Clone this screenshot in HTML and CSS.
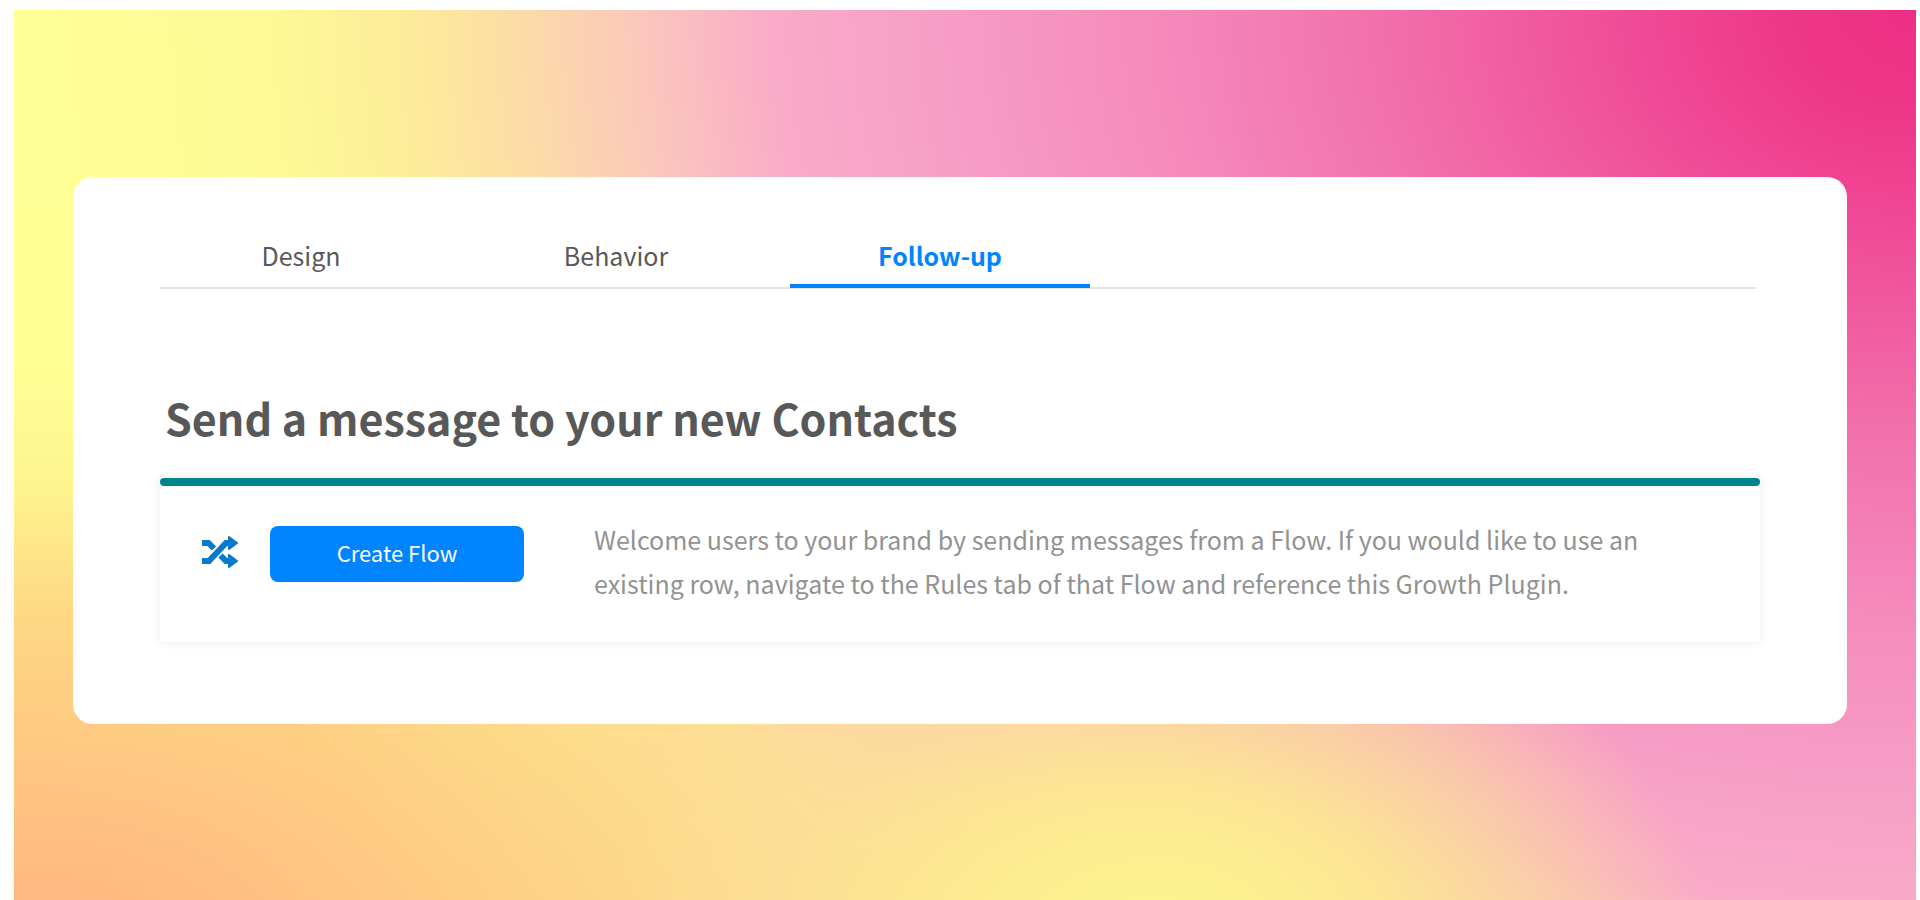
FILE: index.html
```html
<!DOCTYPE html>
<html lang="en">
<head>
<meta charset="utf-8">
<title>Growth Plugin</title>
<link rel="stylesheet" href="styles.css">
</head>
<body>
<main class="stage">
  <section class="card">
    <nav class="tabs">
      <a class="tab tab-first" href="#design">Design</a>
      <a class="tab" href="#behavior">Behavior</a>
      <a class="tab tab-active" href="#follow-up" aria-current="page">Follow-up</a>
    </nav>
    <h1 class="title">Send a message to your new Contacts</h1>
    <div class="panel">
      <div class="panel-bar"></div>
      <div class="panel-body">
        <svg class="icon" viewBox="0 0 38 32" aria-hidden="true">
          <path class="icon-line" d="M1 7H7.500L13 12.500M1 25H8L25 7H30M19.500 19.500L25 25H30"/>
          <path class="icon-head" d="M28 1L36 7L28 13ZM28 19L36 25L28 31Z"/>
        </svg>
        <button class="button" type="button">Create Flow</button>
        <p class="text">Welcome users to your brand by sending messages from a Flow. If you would like to use an existing row, navigate to the Rules tab of that Flow and reference this Growth Plugin.</p>
      </div>
    </div>
  </section>
</main>
</body>
</html>
```
FILE: styles.css
```css
* {
  box-sizing: border-box;
}

body {
  margin: 0;
  padding: 10px 4px 0 14px;
  min-height: 100vh;
  display: flex;
  background: #fff;
  color: #585858;
  font-family: "Noto Sans CJK SC", "Noto Sans", sans-serif;
}

.stage {
  flex: 1;
  padding: 167px 69px 176px 59px;
  background:
    radial-gradient(ellipse 29% 44% at 60% 106%, #fff58c 0%, #fdf090 22%, rgba(252, 232, 144, 0.9) 45%, rgba(251, 224, 150, 0.6) 70%, rgba(251, 212, 160, 0) 100%),
    radial-gradient(ellipse 100% 168% at 100% 0, #ee2f85 0%, #ee3789 7%, #f04b98 15%, #f272ac 29%, #f58abb 40%, #f79bc5 50%, #f9abc8 60%, rgba(251, 196, 190, 0.95) 67%, rgba(251, 212, 172, 0.85) 73%, rgba(252, 226, 156, 0.7) 79%, rgba(252, 236, 150, 0.3) 87%, rgba(252, 240, 150, 0) 98%),
    radial-gradient(ellipse 44% 54% at 0 108%, #ffb47f 0%, #ffb980 18%, rgba(255, 202, 130, 0.8) 55%, rgba(255, 220, 140, 0) 100%),
    linear-gradient(#ffff96 0%, #ffff94 40%, #fef08c 58%, #fdd884 80%, #fdd48a 100%);
}

.card {
  min-height: 547px;
  padding: 50px 87px 82px;
  border-radius: 20px;
  background: #fff;
}

.tabs {
  display: flex;
  gap: 24px;
  margin-right: 4px;
  border-bottom: 2px solid #e4e4e4;
}

.tab {
  width: 300px;
  height: 61px;
  margin-bottom: -1px;
  border-bottom: 4px solid transparent;
  color: #585858;
  font-size: 25px;
  line-height: 56px;
  text-align: center;
  text-decoration: none;
}

.tab-first {
  width: 282px;
}

.tab-active {
  border-bottom-color: #0084ff;
  color: #0084ff;
  font-weight: 700;
}

.title {
  margin: 94px 5px 27px;
  font-size: 43px;
  font-weight: 700;
  line-height: 68px;
}

.panel {
  border-radius: 4px;
  box-shadow: 0 0 8px 2px rgba(0, 0, 0, 0.06);
}

.panel-bar {
  height: 8px;
  border-radius: 4px;
  background: #00868a;
}

.panel-body {
  display: flex;
  align-items: flex-start;
  min-height: 156px;
  padding: 40px 84px 28px 41px;
}

.icon {
  flex: none;
  width: 38px;
  height: 32px;
  margin: 10px 31px 0 0;
}

.icon-line {
  fill: none;
  stroke: #0879cc;
  stroke-width: 6;
}

.icon-head {
  fill: #0879cc;
  stroke: #0879cc;
  stroke-width: 2;
  stroke-linejoin: round;
}

.button {
  flex: none;
  width: 254px;
  height: 56px;
  margin-right: 70px;
  padding: 0 0 4px;
  border: 0;
  border-radius: 8px;
  background: #0084ff;
  color: #fff;
  font-family: inherit;
  font-size: 22px;
}

.text {
  flex: 1;
  margin: -9px 0 0;
  color: #929292;
  font-size: 25px;
  line-height: 44px;
}
```
